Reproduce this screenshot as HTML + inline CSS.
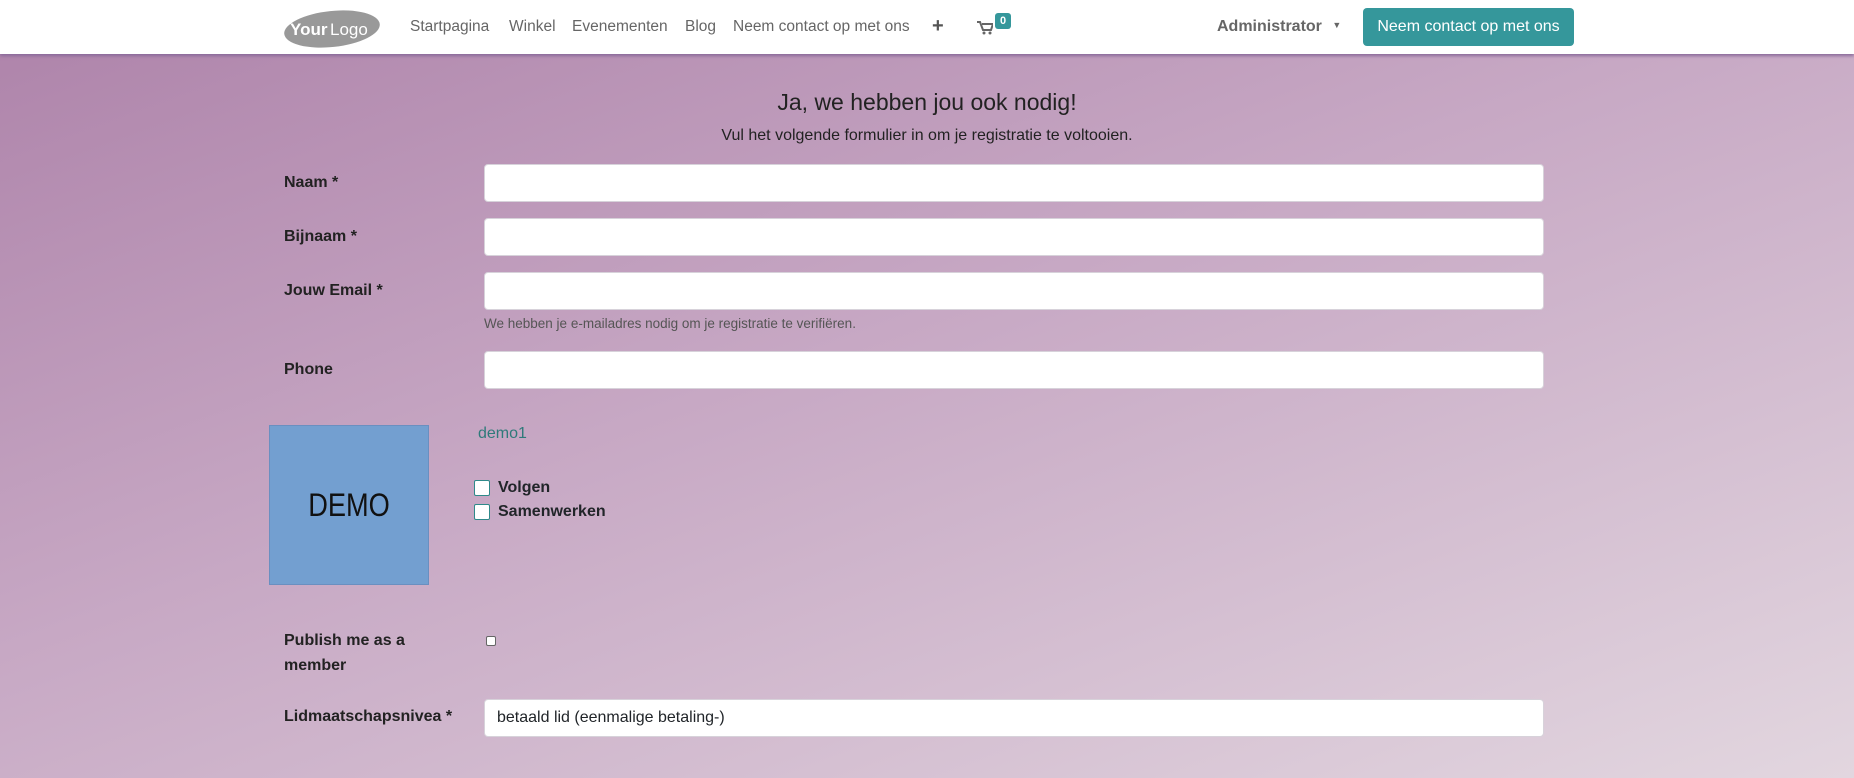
<!DOCTYPE html>
<html><head><style>
*{box-sizing:border-box;margin:0;padding:0}
body{width:1854px;height:778px;overflow:hidden;font-family:"Liberation Sans",Roboto,sans-serif;background:linear-gradient(160deg,#ad82a9 0%,#c7a8c4 45%,#e2d6df 100%);position:relative;color:#212529}
.nav{position:absolute;left:0;top:0;width:1854px;height:54px;background:#fff;box-shadow:0 2px 3px #8a6a9a}
.a{position:absolute;font-size:16px;white-space:nowrap}
.nl{color:#666;top:18px;font-size:15.5px}
.lbl{position:absolute;left:284px;font-weight:bold;font-size:16px;color:#222}
.inp{position:absolute;left:484px;width:1060px;height:38px;background:#fff;border:1px solid #d7d2da;border-radius:4px}
.cb{position:absolute;width:16px;height:16px;background:#fff;border:1px solid #2f8a8a;border-radius:2px}
</style></head><body>
<div class="nav">
<svg style="position:absolute;left:283px;top:8px" width="98" height="40"><ellipse cx="49" cy="21" rx="48" ry="18" fill="#999" transform="rotate(-6 49 21)"/><text x="7" y="27" font-family="Liberation Sans" font-weight="bold" font-size="17" fill="#fff">Your</text><text x="47" y="27" font-family="Liberation Sans" font-size="17" fill="#fff">Logo</text></svg>
<span class="a nl" style="left:410px">Startpagina</span>
<span class="a nl" style="left:509px">Winkel</span>
<span class="a nl" style="left:572px">Evenementen</span>
<span class="a nl" style="left:685px">Blog</span>
<span class="a nl" style="left:733px">Neem contact op met ons</span>
<span class="a" style="left:932px;top:15px;font-size:20px;font-weight:bold;color:#555">+</span>
<svg style="position:absolute;left:977px;top:21px" width="16" height="14"><path d="M0 1h3l3 8h8l2-6H5" fill="none" stroke="#666" stroke-width="2"/><circle cx="7" cy="12" r="1.5" fill="#666"/><circle cx="13" cy="12" r="1.5" fill="#666"/></svg>
<span class="a" style="left:995px;top:13px;background:#35979b;color:#fff;font-size:11px;font-weight:bold;padding:2px 5px;border-radius:3px">0</span>
<span class="a" style="left:1217px;top:18px;color:#666;font-weight:bold">Administrator <span style="font-size:9px;position:relative;top:-3px;margin-left:6px">▼</span></span>
<div class="a" style="left:1363px;top:8px;width:211px;height:38px;background:#35979b;border-radius:4px;color:#fff;text-align:center;line-height:38px;font-size:16px">Neem contact op met ons</div>
</div>
<div class="a" style="left:0;width:1854px;text-align:center;top:89px;font-size:23px;color:#222">Ja, we hebben jou ook nodig!</div>
<div class="a" style="left:0;width:1854px;text-align:center;top:127px;font-size:16px;color:#222">Vul het volgende formulier in om je registratie te voltooien.</div>
<div class="lbl" style="top:174px">Naam *</div><div class="inp" style="top:164px"></div>
<div class="lbl" style="top:228px">Bijnaam *</div><div class="inp" style="top:218px"></div>
<div class="lbl" style="top:282px">Jouw Email *</div><div class="inp" style="top:272px"></div>
<div class="a" style="left:484px;top:316px;font-size:13.5px;color:#555">We hebben je e-mailadres nodig om je registratie te verifiëren.</div>
<div class="lbl" style="top:361px">Phone</div><div class="inp" style="top:351px"></div>
<div class="a" style="left:269px;top:425px;width:160px;height:160px;background:#739fd0;border:1px solid #6a8fc0;text-align:center;line-height:158px;font-size:32px;color:#111;font-family:'Liberation Sans Narrow','Liberation Sans',sans-serif"><span style="display:inline-block;transform:scaleX(0.85)">DEMO</span></div>
<div class="a" style="left:478px;top:425px;color:#2e7a7a">demo1</div>
<div class="cb" style="left:474px;top:480px"></div><div class="a" style="left:498px;top:479px;font-weight:bold">Volgen</div>
<div class="cb" style="left:474px;top:504px"></div><div class="a" style="left:498px;top:503px;font-weight:bold">Samenwerken</div>
<div class="lbl" style="top:628px;line-height:25px">Publish me as a<br>member</div>
<div class="cb" style="left:486px;top:636px;width:10px;height:10px;border-color:#666"></div>
<div class="lbl" style="top:708px">Lidmaatschapsnivea *</div>
<div class="inp" style="top:699px;padding:9px 12px;font-size:16px">betaald lid (eenmalige betaling-)</div>
</body></html>
